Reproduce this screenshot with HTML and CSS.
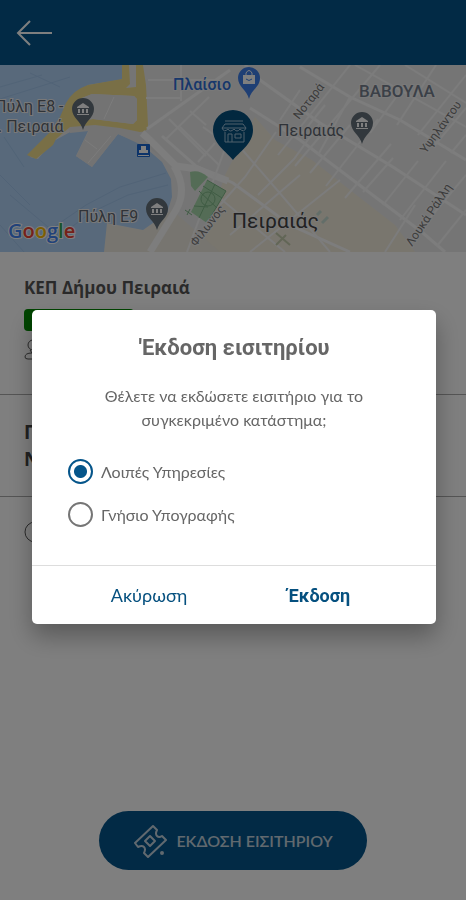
FILE: index.html
```html
<!DOCTYPE html>
<html lang="el">
<head>
<meta charset="utf-8">
<meta name="viewport" content="width=device-width, initial-scale=1">
<title>Έκδοση εισιτηρίου</title>
<link rel="stylesheet" href="styles.css">
</head>
<body>
<div class="page">
  <header class="topbar">
    <button class="back" aria-label="Πίσω">
      <svg width="36" height="28" viewBox="0 0 36 28" fill="none" stroke="#fff" stroke-width="2"><path d="M14 2 2 14l12 12M2 14h34"/></svg>
    </button>
  </header>

  <svg class="map" viewBox="0 0 466 187" preserveAspectRatio="xMidYMid slice" role="img" aria-label="Χάρτης">
    <rect width="466" height="187" fill="#ebebeb"/>
    <path d="M200 187 225 110 255 52 275 75 312 95 350 125 395 160 415 187Z" fill="#f2ecdc"/>
    <path d="M104 187V158L143 165 172 145 220 187Z" fill="#efebe0"/>
    <!-- harbour -->
    <path d="M0 0H125V14L88 20 72 34 62 54 30 92 38 94 52 77 72 66H88L76 91 92 102 118 69 140 78 162 97 171 114 172 132 167 148 143 165 107 158 104 187H0Z" fill="#b0d2f6"/>
    <g fill="none" stroke="#a3c7ee">
      <path d="M0 22 42 10M0 34 70 12M30 8 60 22M4 72 24 102M0 110 30 140M48 166 86 140 120 122 166 108M55 174 92 147 128 130 168 120M10 130 60 172M0 160 24 187"/>
    </g>
    <path d="M66 58 94 54 140 60 148 70 162 92 150 84 118 69 92 102 76 91 89 66 70 68Z" fill="#e6e6e6"/>
    <path d="M122 0H143L146 20 148 60Q148 67 140 67L120 63 95 60 70 62 56 74 53 80 36 94 27 90 49 68 60 52 66 38Q73 25 88 20L122 14ZM129 0 130 19 126 23 136 22 136 0ZM92 29 82 33 73 47 80 56 93 54 133 59 137 55 137 34 134 31Z" fill="#f3df8c" fill-rule="evenodd"/>
    <path d="M92 29 82 33 73 47 80 56 93 54 133 59 137 55 137 34 134 31Z" fill="#e6e6e6"/>
    <g fill="none" stroke="#f8f8f8" stroke-width="1">
      <path d="M114 32 104 54M111 71 88 98M85 75 97 84"/>
    </g>
    <!-- streets -->
    <g fill="none" stroke="#fafafa" stroke-width="3">
      <path d="M142 68 150 75 176 101 197 104 228 116M174 101Q188 124 176 145L150 187" stroke-width="7"/>
      <path d="M147 64 230 5M162 71 196 101 233 118 290 160 350 187"/>
      <path d="M245 0 260 15 320 58 393 102 466 150M300 2 350 32 400 55 466 95M250 43 300 75 366 125 423 168 445 187"/>
    </g>
    <g fill="none" stroke="#f8f8f8" stroke-width="2">
      <path d="M148 15H215M146 33H181M181 0V36M165 75 209 32M169 54 206 91M180 62 219 100M198 97 215 78M206 60 190 46M355 0 466 62M405 0 466 38M203 62 235 85"/>
      <path d="M237 51 187 187M239 81 278 126 330 187M220 140 245 112 276 67M258 130 294 94 320 58M278 90 350 0M295 101 380 0M318 90 350 32M280 55 300 25M300 71 325 40M310 108 350 60M326 121 378 54M345 133 391 79M363 127 393 93M383 140 418 96M400 155 446 96M420 165 466 110M437 181 466 145M385 187 415 140M370 68 405 20M397 60 436 0M418 70 466 10M435 80 466 43M451 88 466 70M210 125 285 187M230 170 300 110M250 187 340 115"/>
    </g>
    <!-- park -->
    <path d="M190 107Q199 104 208 112L195 126 191 121Z" fill="#a9d9ac"/>
    <path d="M207 115 226 126 207 158 191 147Z" fill="#a9d9ac"/>
    <g fill="none" stroke="#7fb888">
      <path d="M207 115 226 126 207 158M199 126 217 143M215 119 199 153M194 141 208 142M203 121 222 133"/>
      <circle cx="208" cy="134" r="7"/>
      <path d="M185 145 192 150M187 150 190 144" />
      <path d="M276 168 290 180M276 180 286 170" stroke="#c4ccad" stroke-width="2"/>
      <path d="M317 150 321 146M322 158 328 152" stroke="#c7ddd3" stroke-width="3"/>
    </g>
    <!-- ferry terminal -->
    <rect x="137" y="79" width="13" height="13" rx="1" fill="#1967d2"/>
    <path d="M141 85V81H146V85H148V88H139V85ZM138 90H149V91H138Z" fill="#fff"/>
    <!-- place pins -->
    <defs>
      <g id="museum-pin">
        <path d="M0 31C-2 22-11 19-11 10A11 11 0 0 1 11 10C11 19 2 22 0 31Z" fill="#65717a"/>
        <path d="M-6 8 0 4 6 8V9H-6ZM-5 10H-3V14H-5ZM-1 10H1V14H-1ZM3 10H5V14H3ZM-6 15H6V16H-6Z" fill="#fff"/>
      </g>
    </defs>
    <use href="#museum-pin" x="83" y="34"/>
    <use href="#museum-pin" x="157" y="134"/>
    <use href="#museum-pin" x="362" y="48"/>
    <path d="M249 34C247 25 238 22 238 13A11 11 0 0 1 260 13C260 22 251 25 249 34Z" fill="#3f7fe8"/>
    <path d="M243 10H255V19H243Z" fill="#fff"/>
    <path d="M246 10V8Q249 3 252 8V10" fill="none" stroke="#fff" stroke-width="1"/>
    <path d="M246 14Q249 17 252 14" fill="none" stroke="#3f7fe8" stroke-width="1"/>
    <path d="M233 95C227 87 213 79 213 65A20 20 0 0 1 253 65C253 79 239 87 233 95Z" fill="#05507f"/>
    <g fill="none" stroke="#9fc0d8" stroke-width="1">
      <path d="M225 56H243M225 59 222 63H246L243 59ZM222 63Q224 68 228 64 230 68 234 64 237 68 240 64 244 68 246 63M225 67V77H244V67M228 77V69H232V77M235 69H241V73H235Z"/>
    </g>
    <!-- labels -->
    <g class="place">
      <text x="-5" y="47">Πύλη E8 -</text>
      <text x="-2" y="67">. Πειραιά</text>
      <text x="78" y="157">Πύλη E9</text>
      <text x="278" y="71">Πειραιάς</text>
      <text x="173" y="25" class="shop">Πλαίσιο</text>
      <text x="359" y="32" class="district">ΒΑΒΟΥΛΑ</text>
      <text x="232" y="163" class="city">Πειραιάς</text>
    </g>
    <g class="street">
      <text transform="translate(299 55) rotate(-52)">Νοταρά</text>
      <text transform="translate(426 89) rotate(-54)">Υψηλάντου</text>
      <text transform="translate(412 182) rotate(-56)">Λουκά Ράλλη</text>
      <text transform="translate(196 182) rotate(-52)">Φίλωνος</text>
    </g>
    <text x="8" y="173" class="google"><tspan fill="#4285f4">G</tspan><tspan fill="#ea4335">o</tspan><tspan fill="#fbbc05">o</tspan><tspan fill="#4285f4">g</tspan><tspan fill="#34a853">l</tspan><tspan fill="#ea4335">e</tspan></text>
  </svg>

  <main>
    <section class="office">
      <h1>ΚΕΠ Δήμου Πειραιά</h1>
      <div class="status"></div>
      <svg class="person" width="20" height="22" viewBox="0 0 20 22" fill="none" stroke="#555" stroke-width="1"><circle cx="9" cy="6" r="5"/><path d="M6 11 8 14Q1 14 1 18 1 20 4 20H16"/></svg>
    </section>
    <section class="details"><h2>Π<br>Ν</h2></section>
    <section class="hours">
      <svg width="22" height="22" viewBox="0 0 22 22" fill="none" stroke="#555" stroke-width="1"><circle cx="11" cy="11" r="10"/><path d="M11 5v6l4 3"/></svg>
    </section>
  </main>

  <footer>
    <button class="issue">
      <svg width="34" height="34" viewBox="0 0 34 34" fill="none" stroke="#c3d2de" stroke-width="2" stroke-linejoin="round"><path d="M20 2 24 6Q22 10 24 12 26 14 29 12L33 16 15 33 11 29Q13 25 11 23 9 21 5 23L2 19Z"/><path d="M17 12 22 17 17 22 12 17Z"/><circle cx="29" cy="29" r="1"/></svg>
      <span>ΕΚΔΟΣΗ ΕΙΣΙΤΗΡΙΟΥ</span>
    </button>
  </footer>
</div>

<div class="overlay">
  <form class="dialog" role="dialog" aria-modal="true" aria-labelledby="dialog-title">
    <div class="content">
      <h2 id="dialog-title">'Εκδοση εισιτηρίου</h2>
      <p>Θέλετε να εκδώσετε εισιτήριο για το συγκεκριμένο κατάστημα;</p>
      <div class="choices">
        <label><input type="radio" name="service" checked><span>Λοιπές Υπηρεσίες</span></label>
        <label><input type="radio" name="service"><span>Γνήσιο Υπογραφής</span></label>
      </div>
    </div>
    <div class="actions">
      <button type="button">Ακύρωση</button>
      <button type="button" class="primary">Έκδοση</button>
    </div>
  </form>
</div>
</body>
</html>
```
FILE: styles.css
```css
* { box-sizing: border-box; }
body {
  margin: 0;
  font-family: Lato, "Open Sans", sans-serif;
  color: #666;
}
h1, h2, p { margin: 0; }
button { border: 0; background: none; font-family: inherit; cursor: pointer; }

.page {
  min-height: 100vh;
  display: flex;
  flex-direction: column;
  background: #fff;
}
.topbar {
  height: 65px;
  display: flex;
  align-items: center;
  padding: 0 16px;
  background: #05558a;
}
.back { padding: 0; display: flex; }
.map { display: block; width: 100%; height: 187px; }
.place { font: 16px Roboto, sans-serif; fill: #5f6670; stroke: #f3f3f3; stroke-width: 2px; paint-order: stroke; }
.place .shop { fill: #2f6fd6; font-size: 16px; font-weight: 500; }
.place .district { fill: #76808f; font-weight: 500; font-size: 17px; }
.place .city { fill: #444; font-size: 21px; }
.street { font: 12px Roboto, sans-serif; fill: #777; stroke: #f3f3f3; stroke-width: 2px; paint-order: stroke; }
.google { font: 600 20px "Open Sans", sans-serif; stroke: #fff; stroke-width: 2px; paint-order: stroke; }

main { flex: 1; }
.office { height: 143px; padding: 24px 24px 0; border-bottom: 1px solid #aaa; }
.office h1 { font: 700 17px/24px "Open Sans", sans-serif; color: #555; }
.status { width: 110px; height: 22px; margin-top: 9px; border-radius: 4px; background: #008a00; }
.person { display: block; margin-top: 8px; }
.details { height: 102px; padding: 24px; border-bottom: 1px solid #aaa; }
.details h2 { font: 700 19px/27px "Open Sans", sans-serif; color: #444; }
.hours { padding: 24px; }
footer { display: flex; justify-content: center; padding: 0 24px 30px; }
.issue {
  height: 59px;
  display: flex;
  align-items: center;
  gap: 9px;
  padding: 0 34px;
  border-radius: 30px;
  background: #05558a;
  color: #c3d2de;
  font: 600 16px Lato, sans-serif;
}

.overlay {
  position: fixed;
  inset: 0;
  display: flex;
  align-items: center;
  justify-content: center;
  padding: 34px 30px 0 32px;
  background: rgba(0, 0, 0, 0.5);
}
.dialog {
  width: 100%;
  max-width: 480px;
  border-radius: 5px;
  background: #fff;
  box-shadow: 0 12px 24px rgba(0, 0, 0, 0.3);
}
.content { padding: 24px 36px 37px; }
.content h2 { font: 700 22px/28px Roboto, sans-serif; text-align: center; }
.content p { margin-top: 22px; padding: 0 16px; font-size: 16px; line-height: 24px; text-align: center; }
.choices { display: grid; gap: 16px; margin-top: 26px; }
.choices label { display: flex; align-items: center; gap: 8px; font-size: 16px; line-height: 27px; }
.choices input {
  appearance: none;
  width: 25px;
  height: 25px;
  margin: 0;
  border: 2px solid #757575;
  border-radius: 50%;
}
.choices input:checked { border-color: #05558a; background: radial-gradient(circle, #05558a 6px, #fff 7px); }
.actions { display: grid; grid-template-columns: 1fr 1fr; padding: 0 32px; border-top: 1px solid #ddd; }
.actions button { height: 58px; padding: 0; color: #05507f; font-size: 18px; }
.actions .primary { font: 700 18px Roboto, sans-serif; }
```
